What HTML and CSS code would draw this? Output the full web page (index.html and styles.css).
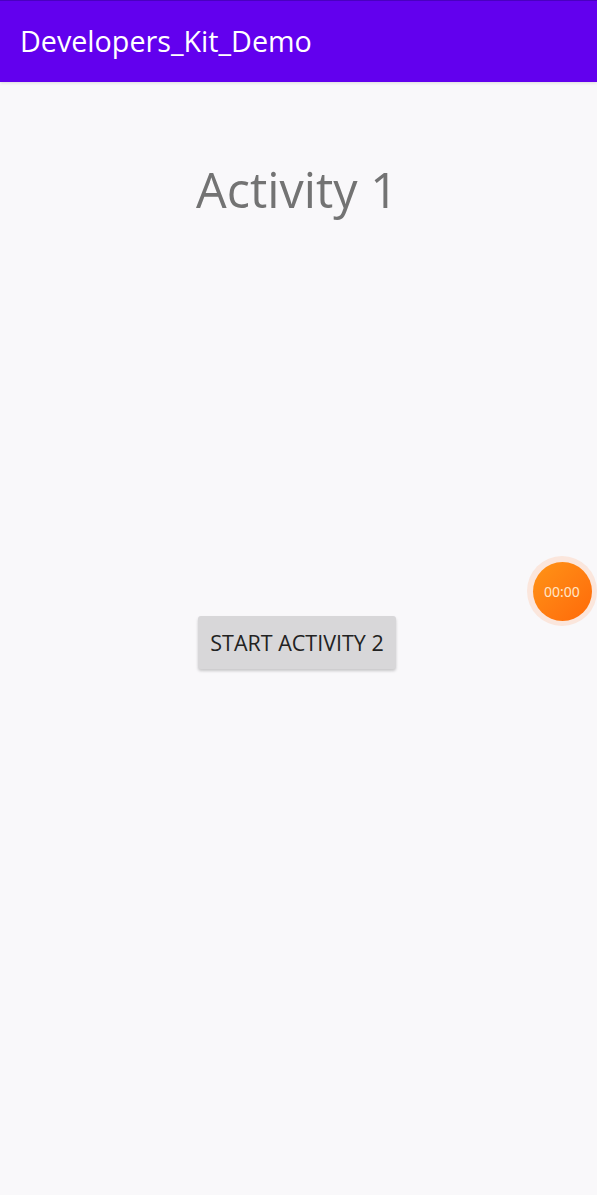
FILE: index.html
```html
<!DOCTYPE html>
<html>
<head>
<meta charset="utf-8">
<link rel="stylesheet" href="styles.css">
</head>
<body>
<div class="screen">
  <header class="appbar"><span class="title">Developers_Kit_Demo</span></header>
  <main class="content">
    <h1 class="heading">Activity 1</h1>
    <div class="spacer"></div>
    <button class="btn">START ACTIVITY 2</button>
  </main>
  <div class="timer"><div class="timer-inner">00:00</div></div>
</div>
</body>
</html>
```
FILE: styles.css
```css
html, body {
  margin: 0;
  padding: 0;
  background: #f9f8fa;
}
.screen {
  position: relative;
  width: 597px;
  height: 1195px;
  overflow: hidden;
  font-family: "Open Sans", "Noto Sans", sans-serif;
  background: #f9f8fa;
}
.appbar {
  height: 82px;
  background: #6200ee;
  border-top: 1px solid #4a00c0;
  box-sizing: border-box;
  display: flex;
  align-items: center;
  padding-left: 20px;
  box-shadow: 0 1px 3px rgba(0,0,0,0.12);
}
.title {
  color: #ffffff;
  font-size: 28.7px;
  margin-top: -2px;
}
.content {
  display: flex;
  flex-direction: column;
  align-items: center;
  padding-right: 3px;
}
.heading {
  margin: 74px 0 0 0;
  font-weight: 400;
  font-size: 48.5px;
  line-height: 66px;
  color: #737373;
}
.spacer {
  height: 394px;
}
.btn {
  width: 198px;
  height: 53px;
  border: none;
  border-radius: 3px;
  background: #d8d7d9;
  box-shadow: 0 2px 3px rgba(0,0,0,0.2);
  font-family: "Open Sans", "Noto Sans", sans-serif;
  font-size: 21.5px;
  color: #222222;
  padding: 0;
}
.timer {
  position: absolute;
  left: 527px;
  top: 556px;
  width: 70px;
  height: 70px;
  border-radius: 50%;
  background: #fbe6dc;
  display: flex;
  align-items: center;
  justify-content: center;
}
.timer-inner {
  width: 59px;
  height: 59px;
  border-radius: 50%;
  background: linear-gradient(135deg, #ff9416 0%, #ff7a10 60%, #ff6a08 100%);
  color: #ffe6c8;
  font-size: 14px;
  display: flex;
  align-items: center;
  justify-content: center;
  font-family: "Noto Sans", sans-serif;
}
```
